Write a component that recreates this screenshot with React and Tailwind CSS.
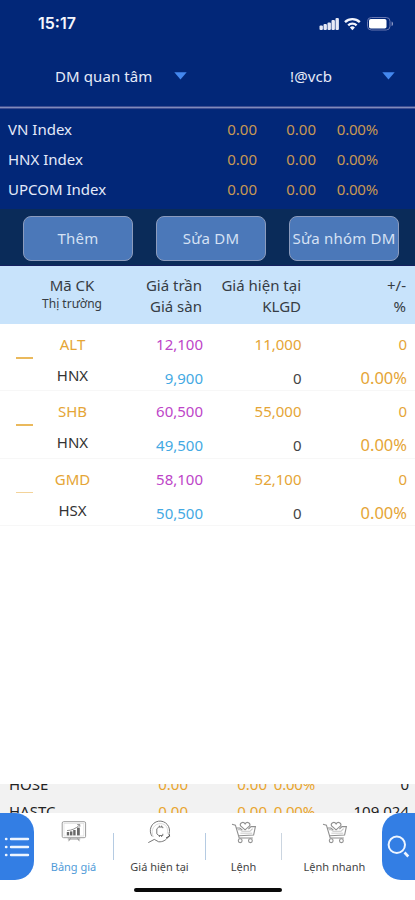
import React from "react";

const indices = ["VN Index", "HNX Index", "UPCOM Index"];

const stocks = [
  { code: "ALT", market: "HNX", ceil: "12,100", floor: "9,900", price: "11,000", mark: "bg-[#eab95c]" },
  { code: "SHB", market: "HNX", ceil: "60,500", floor: "49,500", price: "55,000", mark: "bg-[#eab95c]" },
  { code: "GMD", market: "HSX", ceil: "58,100", floor: "50,500", price: "52,100", mark: "bg-[#f3d39a]" },
];

function StatusIcons() {
  return (
    <svg className="ml-auto mr-[20px] mt-[1px]" width="76" height="16" viewBox="0 0 76 16" fill="none">
      <g fill="#e6e9f6">
        <rect x="0.5" y="9.5" width="3.4" height="4.5" rx="1" />
        <rect x="4.5" y="8" width="3.4" height="6" rx="1" />
        <rect x="8.5" y="6.5" width="3.4" height="7.5" rx="1" />
        <rect x="12.5" y="4" width="3.4" height="10" rx="1" />
        <rect x="16.5" y="2" width="3.4" height="12" rx="1" />
      </g>
      <g stroke="#f3f4fc" strokeWidth="2.4">
        <path d="M26 6.1a10.8 10.8 0 0 1 14.8 0" />
        <path d="M29.2 9.3a6 6 0 0 1 8.4 0" />
      </g>
      <path d="M30.9 11.5a3.6 3.6 0 0 1 5 0L33.4 14.2z" fill="#f3f4fc" />
      <rect x="48.5" y="1.5" width="22.5" height="12.5" rx="3.8" stroke="#6776b0" />
      <rect x="50" y="3" width="17.5" height="9.5" rx="1.8" fill="#fff" />
      <path d="M72.6 5.4c1.9.7 1.9 4 0 4.7z" fill="#8f9ac6" />
    </svg>
  );
}

function Caret() {
  return (
    <svg width="13" height="8" viewBox="0 0 13 8">
      <path d="M0.3 0.2h12.4L6.5 7.6z" fill="#4488ee" />
    </svg>
  );
}

function BoardIcon() {
  return (
    <svg width="26" height="24" viewBox="0 0 26 24" fill="none">
      <rect x="1.2" y="1.7" width="23.4" height="16" rx="1.4" stroke="#9a9a9a" />
      <rect x="3" y="3.4" width="19.8" height="12.6" stroke="#dcdcdc" strokeWidth="0.7" />
      <g fill="#686868">
        <rect x="5.8" y="12" width="2.4" height="3.4" />
        <rect x="9" y="11.4" width="2.4" height="4" />
        <rect x="12.2" y="10" width="2.4" height="5.4" />
        <rect x="16" y="7.6" width="2.8" height="7.8" />
      </g>
      <path d="M6 10.6c5-.2 9-2.2 12.4-5.4M16.2 4.6h2.6v2.2" stroke="#777" strokeWidth="0.8" />
      <path d="M6.8 19h12.4M9.4 18.4l-1.8 2.8M16.6 18.4l1.8 2.8" stroke="#888" strokeWidth="0.9" />
    </svg>
  );
}

function CoinIcon() {
  return (
    <svg width="26" height="26" viewBox="0 0 26 26" fill="none" stroke="#777" strokeWidth="1">
      <path d="M5.2 16.4A9.6 9.6 0 1 1 22 13.8" />
      <path d="M1.3 22.6l6-3.2 4.4 2.4c4 .2 7-1.3 10-5.3" />
      <path d="M19.2 17.8l3.4-1.6-.6-2.2" stroke="#444" />
      <path d="M6.4 17C2.7 9.6 8 3.2 13.8 3.6c5.2.3 8 5 6.4 10.2" stroke="#d2d2d2" strokeWidth="0.8" />
      <path d="M15.8 8.2V7h-4L9.8 8.8v5l2 1.7h4v-1.7M12.4 5.6V7M14.6 5.6V7M12.4 15.5V17M14.6 15.5V17" />
    </svg>
  );
}

function CartIcon() {
  return (
    <svg width="26" height="26" viewBox="0 0 26 26" fill="none" stroke="#909090" strokeWidth="1.1">
      <path d="M1 4.2l3.4.9L8.2 18h13.6M5.6 8h3.2l2.6 2.2M17.4 9.2L20 6.6h4.4L22.6 15 8 15.8" />
      <path d="M6.6 9.6h2.6l1.8 1.7h8l2.6-2.6" stroke="#c4c4c4" />
      <path d="M14.1 9.8L9.6 6c-1.4-2.8 2.6-5.2 4.5-2.1 1.9-3.1 5.9-.7 4.5 2.1z" fill="white" />
      <path d="M9.4 13.2h11.8" stroke="#cfcfcf" />
      <circle cx="9.2" cy="20.7" r="1.9" />
      <circle cx="19.4" cy="20.7" r="1.9" />
    </svg>
  );
}

function ActionButton({ children }) {
  return (
    <button className="flex h-[45px] w-[110px] items-center justify-center whitespace-nowrap rounded-[8px] border border-[#8b9bbd] bg-[#4b78b9] text-[15px] tracking-[0.2px] text-[#d5e1f4]">
      {children}
    </button>
  );
}

function Tab({ icon, label, className, active }) {
  return (
    <div className={`flex shrink-0 flex-col items-center ${className}`}>
      <div className="flex h-[26px] items-start justify-center">{icon}</div>
      <div className={`mt-[12px] whitespace-nowrap text-[11px] leading-[18px] ${active ? "text-[#4f9bd8]" : "text-[#444]"}`}>
        {label}
      </div>
    </div>
  );
}

function SummaryRow({ name, value }) {
  return (
    <div className="flex h-[27px] items-center text-[15px] leading-[27px]">
      <div className="w-[150px] pl-[9px] text-[#222]">{name}</div>
      <div className="w-[38px] text-right text-[#e9a52e]">0.00</div>
      <div className="w-[79px] text-right text-[#e9a52e]">0.00</div>
      <div className="w-[48px] text-right tracking-[-0.2px] text-[#e9a52e]">0.00%</div>
      <div className="flex-1 pr-[6px] text-right text-[#222]">{value}</div>
    </div>
  );
}

export default function App() {
  return (
    <div className="flex h-[900px] w-[415px] flex-col overflow-hidden bg-white font-['Noto_Sans','Open_Sans',sans-serif] text-[15px]">
      <header className="h-[209px] bg-[#022778]">
        <div className="flex h-[46px] items-center pl-[38px]">
          <span className="font-['Inter',sans-serif] text-[16px] font-semibold text-[#f4f5fc]">15:17</span>
          <StatusIcons />
        </div>
        <div className="flex h-[60px] items-center text-[#e6ebf9]">
          <div className="w-[174px] whitespace-nowrap pl-[55px] tracking-[0.1px]">DM quan tâm</div>
          <Caret />
          <div className="ml-[103px] w-[92px] tracking-[0.1px]">!@vcb</div>
          <Caret />
        </div>
        <div className="h-[3px] border-y border-[#3d4d93] bg-[#7f8bbb]" />
        <div className="pt-[5px]">
          {indices.map((name) => (
            <div key={name} className="flex h-[30px] items-center text-[#c89853]">
              <div className="w-[157px] pl-[8px] text-[#e4eafa]">{name}</div>
              <div className="w-[100px] text-right">0.00</div>
              <div className="w-[59px] text-right">0.00</div>
              <div className="w-[62px] text-right tracking-[-0.2px]">0.00%</div>
            </div>
          ))}
        </div>
      </header>

      <div className="flex h-[57px] shrink-0 justify-between border-b border-[#152060] bg-[#0a2b59] pl-[23px] pr-[16px] pt-[7px]">
        <ActionButton>Thêm</ActionButton>
        <ActionButton>Sửa DM</ActionButton>
        <ActionButton>Sửa nhóm DM</ActionButton>
      </div>

      <div className="flex h-[58px] shrink-0 bg-[#c8e3fb] pt-[9px] leading-[20px] text-[#363c44]">
        <div className="w-[144px] text-center">
          <div>Mã CK</div>
          <div className="mt-[1px] text-[12px] leading-[16px]">Thị trường</div>
        </div>
        <div className="w-[58px] whitespace-nowrap text-right">
          <div>Giá trần</div>
          <div className="mt-[1px]">Giá sàn</div>
        </div>
        <div className="w-[99px] text-right">
          <div>Giá hiện tại</div>
          <div className="mt-[1px]">KLGD</div>
        </div>
        <div className="w-[105px] text-right">
          <div>+/-</div>
          <div className="mt-[1px]">%</div>
        </div>
      </div>

      <main className="h-[460px] shrink-0">
        {stocks.map((s) => (
          <div key={s.code} className="flex h-[67.3px] border-b border-[#f7f7f7] pt-[5px] text-[#e5a536]">
            <div className="w-[34px] pl-[16px] pt-[28px]">
              <div className={`h-[1.5px] w-[17px] ${s.mark}`} />
            </div>
            <div className="w-[77px] text-center leading-[30px]">
              <div>{s.code}</div>
              <div className="mt-[1px] text-[#333]">{s.market}</div>
            </div>
            <div className="w-[92px] text-right leading-[30px]">
              <div className="text-[#bd45c8]">{s.ceil}</div>
              <div className="mt-[4px] text-[#43a9e3]">{s.floor}</div>
            </div>
            <div className="w-[98.5px] text-right leading-[30px]">
              <div>{s.price}</div>
              <div className="mt-[4px] text-[#444]">0</div>
            </div>
            <div className="w-[105.5px] text-right leading-[30px]">
              <div>0</div>
              <div className="mt-[4px] text-[16.5px]">0.00%</div>
            </div>
          </div>
        ))}
      </main>

      <div className="h-[29px] shrink-0 overflow-hidden bg-[#f2f2f2]">
        <div className="mt-[-13px]">
          <SummaryRow name="HOSE" value="0" />
          <SummaryRow name="HASTC" value="109,024" />
        </div>
      </div>

      <footer className="h-[87px] shrink-0 bg-white">
        <div className="flex h-[67px]">
          <div className="flex w-[34px] shrink-0 items-center rounded-r-[19px] bg-[#337ee4] pl-[4px]">
            <svg width="26" height="22" viewBox="0 0 26 22" stroke="#eef5ff" strokeWidth="2.4" strokeLinecap="round">
              <path d="M2 3h.4M7 3h17M2 11h.4M7 11h17M2 19h.4M7 19h17" />
            </svg>
          </div>
          <Tab className="w-[79px] pt-[7px]" icon={<BoardIcon />} label="Bảng giá" active />
          <div className="mt-[20px] h-[27px] w-px bg-[#b5cbe2]" />
          <Tab className="w-[91px] pt-[7px]" icon={<CoinIcon />} label="Giá hiện tại" />
          <div className="mt-[20px] h-[27px] w-px bg-[#b5cbe2]" />
          <Tab className="w-[75px] pt-[7px]" icon={<CartIcon />} label="Lệnh" />
          <div className="mt-[20px] h-[27px] w-px bg-[#cbd5e0]" />
          <Tab className="w-[100px] pl-[5px] pt-[7px]" icon={<CartIcon />} label="Lệnh nhanh" />
          <div className="flex flex-1 items-center rounded-l-[19px] bg-[#337ee4] pl-[5px]">
            <svg width="24" height="24" viewBox="0 0 24 24" fill="none" stroke="#eef5ff">
              <circle cx="9.8" cy="9.8" r="8.2" strokeWidth="2" />
              <path d="M17.5 17.5l3.8 4" strokeWidth="2.6" />
            </svg>
          </div>
        </div>
        <div className="ml-[134px] mt-[8px] h-[4px] w-[148px] rounded-full bg-[#0a0a0a]" />
      </footer>
    </div>
  );
}
